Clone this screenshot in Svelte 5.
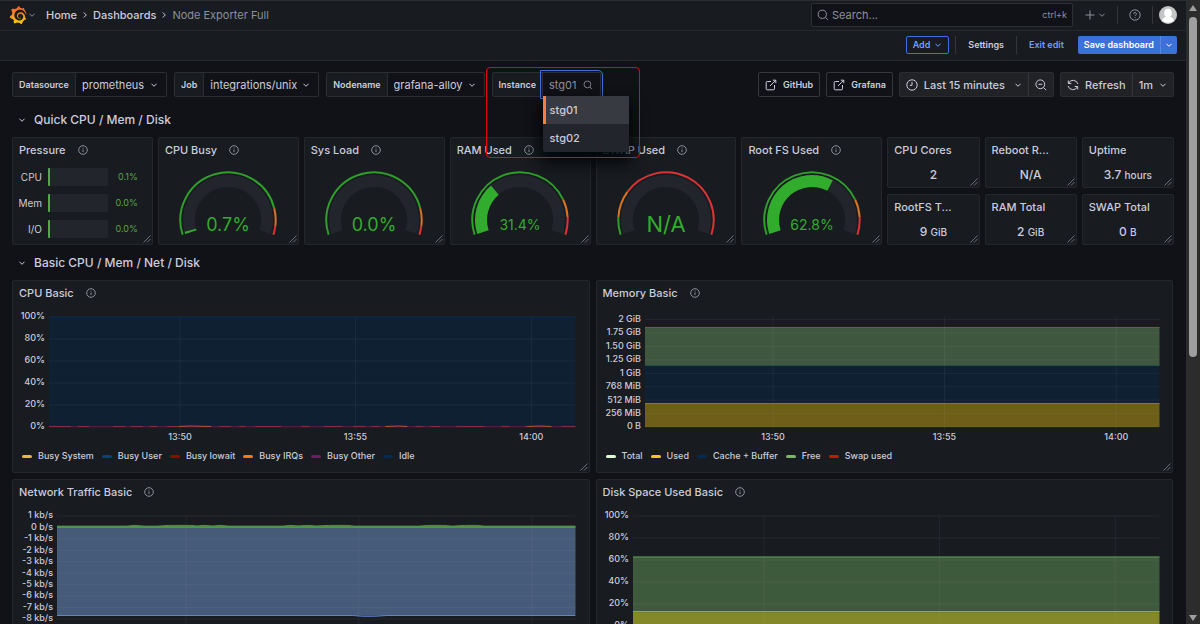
<script>
  const variables = [
    { id: "datasource", label: "Datasource", value: "prometheus" },
    { id: "job", label: "Job", value: "integrations/unix" },
    { id: "nodename", label: "Nodename", value: "grafana-alloy" },
  ];

  const instances = ["stg01", "stg02"];
  let instance = $state("stg01");

  const pressure = [
    { label: "CPU", value: "0.1%" },
    { label: "Mem", value: "0.0%" },
    { label: "I/O", value: "0.0%" },
  ];

  const gauges = [
    { title: "CPU Busy", text: "0.7%", value: 0.7, steps: [85, 95], size: "medium" },
    { title: "Sys Load", text: "0.0%", value: 0, steps: [85, 95], size: "medium" },
    { title: "RAM Used", text: "31.4%", value: 31.4, steps: [80, 90], size: "small" },
    { title: "SWAP Used", text: "N/A", value: 0, steps: [10, 25], size: "large" },
    { title: "Root FS Used", text: "62.8%", value: 62.8, steps: [80, 90], size: "small" },
  ];

  const stats = [
    { title: "CPU Cores", value: "2", unit: "" },
    { title: "Reboot R...", value: "N/A", unit: "" },
    { title: "Uptime", value: "3.7", unit: "hours" },
    { title: "RootFS T...", value: "9", unit: "GiB" },
    { title: "RAM Total", value: "2", unit: "GiB" },
    { title: "SWAP Total", value: "0", unit: "B" },
  ];

  const percentTicks = ["100%", "80%", "60%", "40%", "20%", "0%"];
  const times = [
    { label: "13:50", at: 24.9 },
    { label: "13:55", at: 58.2 },
    { label: "14:00", at: 91.6 },
  ];

  // step, areas and lines are percentages of the plot height, from the top
  const charts = [
    {
      title: "CPU Basic",
      axis: "short",
      ticks: percentTicks,
      first: 0,
      step: 20,
      areas: [{ from: 0, to: 100, color: "#0f2033" }],
      lines: [{ at: 0.5, color: "#052b51" }],
      noise: "cpu",
      legend: [
        ["Busy System", "#eab839"],
        ["Busy User", "#0a437c"],
        ["Busy Iowait", "#890f02"],
        ["Busy IRQs", "#ff780a"],
        ["Busy Other", "#6d1f62"],
        ["Idle", "#052b51"],
      ],
    },
    {
      title: "Memory Basic",
      axis: "wide",
      ticks: ["2 GiB", "1.75 GiB", "1.50 GiB", "1.25 GiB", "1 GiB", "768 MiB", "512 MiB", "256 MiB", "0 B"],
      first: 2.4,
      step: 12.2,
      areas: [
        { from: 9.1, to: 44.5, color: "#40573f" },
        { from: 44.5, to: 78.2, color: "#0f2033" },
        { from: 78.2, to: 100, color: "#6d5f18" },
      ],
      lines: [
        { at: 9.5, color: "#b53f2a" },
        { at: 44.1, color: "#285044" },
        { at: 78.6, color: "#8f7c12" },
      ],
      legend: [
        ["Total", "#e0f9d7"],
        ["Used", "#f2cc0c"],
        ["Cache + Buffer", "#052b51"],
        ["Free", "#7eb26d"],
        ["Swap used", "#bf1b00"],
      ],
    },
    {
      title: "Network Traffic Basic",
      axis: "medium",
      ticks: ["1 kb/s", "0 b/s", "-1 kb/s", "-2 kb/s", "-3 kb/s", "-4 kb/s", "-5 kb/s", "-6 kb/s", "-7 kb/s", "-8 kb/s"],
      first: 0,
      step: 10.4,
      areas: [{ from: 10.4, to: 90.6, color: "#465a79" }],
      lines: [
        { at: 9.5, color: "#4f9a48" },
        { at: 10.5, color: "#9c7440" },
      ],
      noise: "network",
      legend: [],
    },
    {
      title: "Disk Space Used Basic",
      axis: "short",
      ticks: percentTicks,
      first: 0,
      step: 20,
      areas: [
        { from: 36.9, to: 87.4, color: "#3e5a3d" },
        { from: 87.4, to: 100, color: "#858828" },
      ],
      lines: [
        { at: 37.3, color: "#619a58" },
        { at: 86.9, color: "#c3a80f" },
      ],
      legend: [],
    },
  ];

  // Gauge sweep: 216 degrees, starting 18 degrees below the left horizontal
  function point(radius, percent) {
    const angle = ((198 - percent * 2.16) * Math.PI) / 180;
    return `${(49 + radius * Math.cos(angle)).toFixed(2)} ${(49 - radius * Math.sin(angle)).toFixed(2)}`;
  }

  function arc(radius, from, to) {
    const large = (to - from) * 2.16 > 180 ? 1 : 0;
    return `M${point(radius, from)}A${radius} ${radius} 0 ${large} 1 ${point(radius, to)}`;
  }
</script>

{#snippet chevron()}
  <svg class="chevron" viewBox="0 0 8 8" aria-hidden="true"><path d="M1.5 2.8 4 5.3l2.5-2.5" /></svg>
{/snippet}

{#snippet separator()}
  <svg class="chevron" viewBox="0 0 8 8" aria-hidden="true"><path d="M2.8 1.5 5.3 4 2.8 6.5" /></svg>
{/snippet}

{#snippet magnifier()}
  <svg class="icon" viewBox="0 0 12 12" aria-hidden="true">
    <circle cx="5.3" cy="5.3" r="4.1" /><path d="m8.3 8.3 2.6 2.6" />
  </svg>
{/snippet}

{#snippet external()}
  <svg class="icon" viewBox="0 0 12 12" aria-hidden="true">
    <path d="M6 2.5H2.2a1 1 0 0 0-1 1v6.3a1 1 0 0 0 1 1h6.3a1 1 0 0 0 1-1V6M7.8 1.2h3v3M10.6 1.4 5 7" />
  </svg>
{/snippet}

{#snippet panelTitle(title, info)}
  <header class="panel-header">
    <h3>{title}</h3>
    {#if info}
      <button class="info" aria-label="Panel description">
        <svg class="info-icon" viewBox="0 0 10 10">
          <circle cx="5" cy="5" r="4.3" /><path d="M5 4.5v2.6M5 2.7v.9" />
        </svg>
      </button>
    {/if}
  </header>
{/snippet}

{#snippet handle()}
  <svg class="handle" viewBox="0 0 8 8" aria-hidden="true"><path d="M.5 7.5l7-7M4 7.5 7.5 4" /></svg>
{/snippet}

<div class="window">
  <div class="page">
    <header class="topbar">
      <button class="logo-button" aria-label="Open menu">
        <svg class="logo" viewBox="0 0 24 24">
          <defs>
            <linearGradient id="flame" x1="0" y1="1" x2="0" y2="0">
              <stop offset="0" stop-color="#fcd10a" />
              <stop offset="0.45" stop-color="#f9961e" />
              <stop offset="1" stop-color="#f05a28" />
            </linearGradient>
          </defs>
          <path
            fill="url(#flame)"
            d="M23.02 10.59a8.578 8.578 0 0 0-.862-3.034 8.911 8.911 0 0 0-1.789-2.445c.337-1.342-.413-2.505-.413-2.505-1.292-.08-2.113.4-2.416.62-.052-.02-.102-.044-.154-.064-.22-.089-.446-.172-.677-.247-.231-.073-.47-.14-.711-.197a9.867 9.867 0 0 0-.875-.161C14.557.753 12.94 0 12.94 0c-1.804 1.145-2.147 2.744-2.147 2.744l-.018.093c-.098.029-.2.057-.298.088-.138.042-.275.094-.413.143-.138.055-.275.107-.41.166a8.869 8.869 0 0 0-1.557.87l-.063-.029c-2.497-.955-4.716.195-4.716.195-.203 2.658.996 4.33 1.235 4.636a11.608 11.608 0 0 0-.607 2.635C1.636 12.677.953 15.014.953 15.014c1.926 2.214 4.171 2.351 4.171 2.351.003-.002.006-.002.006-.005.285.509.615.994.986 1.446.156.19.32.371.488.548-.704 2.009.099 3.68.099 3.68 2.144.08 3.553-.937 3.849-1.173a9.784 9.784 0 0 0 3.164.501h.08l.055-.003.107-.002.103-.005.003.002c1.01 1.44 2.788 1.646 2.788 1.646 1.264-1.332 1.337-2.653 1.337-2.94v-.058c0-.02-.003-.039-.003-.06.265-.187.52-.387.758-.6a7.875 7.875 0 0 0 1.415-1.7c1.43.083 2.437-.885 2.437-.885-.236-1.49-1.085-2.216-1.264-2.354l-.018-.013-.016-.013a.217.217 0 0 1-.031-.02c.008-.092.016-.18.02-.27.011-.162.016-.323.016-.48v-.253l-.005-.098-.008-.135a1.891 1.891 0 0 0-.01-.13c-.003-.042-.008-.083-.013-.125l-.016-.124-.018-.122a6.215 6.215 0 0 0-2.032-3.73 6.015 6.015 0 0 0-3.222-1.46 6.292 6.292 0 0 0-.85-.048l-.107.002h-.063l-.044.003-.104.008a4.777 4.777 0 0 0-3.335 1.695c-.332.4-.592.84-.768 1.297a4.594 4.594 0 0 0-.312 1.817l.003.091c.005.055.007.11.013.164a3.615 3.615 0 0 0 .698 1.82 3.53 3.53 0 0 0 1.827 1.282c.33.098.66.14.971.137.039 0 .078 0 .114-.002l.063-.003c.02 0 .041-.003.062-.003.034-.002.065-.007.099-.01.007 0 .018-.003.028-.003l.031-.005.06-.008a1.18 1.18 0 0 0 .112-.02c.036-.008.072-.013.109-.024a2.634 2.634 0 0 0 .914-.415c.028-.02.056-.041.085-.065a.248.248 0 0 0 .039-.35.244.244 0 0 0-.309-.06l-.078.042c-.09.044-.184.083-.283.116a2.476 2.476 0 0 1-.475.096c-.028.003-.054.006-.083.006l-.083.002c-.026 0-.054 0-.08-.002l-.102-.006h-.012l-.024.006c-.016-.003-.031-.003-.044-.006-.031-.002-.06-.007-.091-.01a2.59 2.59 0 0 1-.724-.213 2.557 2.557 0 0 1-.667-.438 2.52 2.52 0 0 1-.805-1.475 2.306 2.306 0 0 1-.029-.444l.006-.122v-.023l.002-.031c.003-.021.003-.04.005-.06a3.163 3.163 0 0 1 1.352-2.29 3.12 3.12 0 0 1 .937-.43 2.946 2.946 0 0 1 .776-.101h.06l.07.002.045.003h.026l.07.005a4.041 4.041 0 0 1 1.635.49 3.94 3.94 0 0 1 1.602 1.662 3.77 3.77 0 0 1 .397 1.414l.005.076.003.075c.002.026.002.05.002.075 0 .024.003.052 0 .07v.065l-.002.073-.008.174a6.195 6.195 0 0 1-.08.639 5.1 5.1 0 0 1-.267.927 5.31 5.31 0 0 1-.624 1.13 5.052 5.052 0 0 1-3.237 2.014 4.82 4.82 0 0 1-.649.066l-.039.003h-.287a6.607 6.607 0 0 1-1.716-.265 6.776 6.776 0 0 1-3.4-2.274 6.75 6.75 0 0 1-.746-1.15 6.616 6.616 0 0 1-.714-2.596l-.005-.083-.002-.02v-.056l-.003-.073v-.096l-.003-.104v-.07l.003-.163c.008-.22.026-.45.054-.678a8.707 8.707 0 0 1 .28-1.355c.128-.444.286-.872.473-1.277a7.04 7.04 0 0 1 1.456-2.1 5.925 5.925 0 0 1 .953-.763c.169-.111.343-.213.524-.306.089-.05.182-.091.273-.135.047-.02.093-.042.138-.062a7.177 7.177 0 0 1 .714-.267l.145-.045c.049-.015.098-.026.148-.041.098-.029.197-.052.296-.076.049-.013.1-.02.15-.033l.15-.032.151-.028.076-.013.075-.01.153-.024c.057-.01.114-.013.171-.023l.169-.021c.036-.003.073-.008.106-.01l.073-.008.036-.003.042-.002c.057-.003.114-.008.171-.01l.086-.006h.023l.037-.003.145-.007a7.999 7.999 0 0 1 1.708.125 7.917 7.917 0 0 1 2.048.68 8.253 8.253 0 0 1 1.672 1.09l.09.077.089.078c.06.052.114.107.171.159.057.052.112.106.166.16.052.055.107.107.159.164a8.671 8.671 0 0 1 1.41 1.978c.012.026.028.052.04.078l.04.078.075.156c.023.051.05.1.07.153l.065.15a8.848 8.848 0 0 1 .45 1.34.19.19 0 0 0 .201.142.186.186 0 0 0 .172-.184c.01-.246.002-.532-.024-.856z"
          />
        </svg>
        {@render chevron()}
      </button>
      <nav class="crumbs" aria-label="Breadcrumbs">
        <a href="#home">Home</a>
        {@render separator()}
        <a href="#dashboards">Dashboards</a>
        {@render separator()}
        <span>Node Exporter Full</span>
      </nav>
      <label class="search">
        {@render magnifier()}
        <input type="text" placeholder="Search..." aria-label="Search" />
        <kbd>ctrl+k</kbd>
      </label>
      <button class="quiet new" aria-label="New">
        <svg class="icon" viewBox="0 0 12 12"><path d="M6 1.5v9M1.5 6h9" /></svg>
        {@render chevron()}
      </button>
      <span class="rule"></span>
      <button class="quiet" aria-label="Help">
        <svg class="icon" viewBox="0 0 12 12">
          <circle cx="6" cy="6" r="5.2" />
          <path d="M4.6 4.9a1.4 1.4 0 1 1 2 1.3q-.6.3-.6.9M6 8.2v.9" />
        </svg>
      </button>
      <span class="rule"></span>
      <button class="avatar" aria-label="Profile">
        <svg viewBox="0 0 18 18">
          <circle cx="9" cy="9" r="9" fill="#c4c4c4" />
          <ellipse cx="9" cy="7" rx="3.8" ry="4.3" fill="#fff" />
          <path d="M3 14.3C4 11.600 6 10.500 9 10.500s5 1.100 6 3.800A8 8 0 0 1 9 17a8 8 0 0 1-6-2.700z" fill="#fff" />
        </svg>
      </button>
    </header>

    <div class="toolbar">
      <button class="button add">Add {@render chevron()}</button>
      <span class="rule"></span>
      <button class="button">Settings</button>
      <span class="rule"></span>
      <button class="button exit">Exit edit</button>
      <div class="save">
        <button class="button">Save dashboard</button>
        <button class="button more" aria-label="More save options">{@render chevron()}</button>
      </div>
    </div>

    <main>
      <div class="controls">
        {#each variables as variable}
          <div class="field">
            <label for={variable.id}>{variable.label}</label>
            <div class="select">
              <select id={variable.id}>
                <option>{variable.value}</option>
              </select>
              {@render chevron()}
            </div>
          </div>
        {/each}
        <div class="field instance">
          <label for="instance">Instance</label>
          <div class="combo">
            <input
              id="instance"
              type="text"
              role="combobox"
              aria-expanded="true"
              aria-controls="instance-list"
              placeholder={instance}
            />
            {@render magnifier()}
          </div>
          <div class="menu" id="instance-list" role="listbox">
            {#each instances as name}
              <button
                role="option"
                aria-selected={name === instance}
                class:selected={name === instance}
                onclick={() => (instance = name)}>{name}</button
              >
            {/each}
          </div>
          <div class="highlight"></div>
        </div>

        <div class="actions">
          <a class="link" href="#github">{@render external()} GitHub</a>
          <a class="link" href="#grafana">{@render external()} Grafana</a>
          <div class="group">
            <button>
              <svg class="icon" viewBox="0 0 12 12">
                <circle cx="6" cy="6" r="5.2" /><path d="M6 2.8V6.3H3.8" />
              </svg>
              Last 15 minutes
              <span class="spaced">{@render chevron()}</span>
            </button>
            <button aria-label="Zoom out">
              <svg class="icon" viewBox="0 0 12 12">
                <circle cx="5.3" cy="5.3" r="4.4" /><path d="m8.5 8.5 2.7 2.7M3.3 5.3h4" />
              </svg>
            </button>
          </div>
          <div class="group">
            <button>
              <svg class="icon" viewBox="0 0 12 12">
                <path d="M1.3 1.5v3h3M1.5 4.3A5 5 0 0 1 10.9 5M10.7 10.5v-3h-3M10.5 7.7A5 5 0 0 1 1.1 7" />
              </svg>
              Refresh
            </button>
            <button>1m {@render chevron()}</button>
          </div>
        </div>
      </div>

      <h2>{@render chevron()} Quick CPU / Mem / Disk</h2>
      <div class="grid quick">
        <section class="panel">
          {@render panelTitle("Pressure", true)}
          <div class="bars">
            {#each pressure as row}
              <span class="bar-label">{row.label}</span>
              <span class="bar"></span>
              <span class="bar-value">{row.value}</span>
            {/each}
          </div>
          {@render handle()}
        </section>
        {#each gauges as gauge}
          <section class="panel">
            {@render panelTitle(gauge.title, true)}
            <svg class="gauge" viewBox="0 0 98 66" role="img" aria-label={gauge.title}>
              <path class="track" d={arc(39, 0, 100)} />
              {#if gauge.value > 0}
                <path class="value" d={arc(39, 0, Math.max(gauge.value, 1.3))} />
              {/if}
              <path class="ring green" d={arc(47.7, 0, gauge.steps[0])} />
              <path class="ring orange" d={arc(47.7, gauge.steps[0], gauge.steps[1])} />
              <path class="ring red" d={arc(47.7, gauge.steps[1], 100)} />
              <text class={gauge.size} x="49" y="53">{gauge.text}</text>
            </svg>
            {@render handle()}
          </section>
        {/each}
        {#each stats as stat}
          <section class="panel stat">
            {@render panelTitle(stat.title, false)}
            <p>{stat.value} {#if stat.unit}<small>{stat.unit}</small>{/if}</p>
            {@render handle()}
          </section>
        {/each}
      </div>

      <h2>{@render chevron()} Basic CPU / Mem / Net / Disk</h2>
      <div class="grid basic">
        {#each charts as chart}
          <section class="panel">
            {@render panelTitle(chart.title, true)}
            <div class="chart {chart.axis}">
              <svg class="plot" role="img" aria-label={chart.title}>
                {#each chart.areas as area}
                  <rect x="0" y="{area.from}%" width="100%" height="{area.to - area.from}%" fill={area.color} />
                {/each}
                {#each chart.ticks as tick, i}
                  <line class="gridline" x1="0" x2="100%" y1="{chart.first + i * chart.step}%" y2="{chart.first + i * chart.step}%" />
                  <text class="tick-y" x="-4" y="{chart.first + i * chart.step - 1}%">{tick}</text>
                {/each}
                {#each times as time}
                  <line class="gridline" x1="{time.at}%" x2="{time.at}%" y1="0" y2="103%" />
                  <text class="tick-x" x="{time.at}%" y="109%">{time.label}</text>
                {/each}
                {#each chart.lines as line}
                  <line x1="0" x2="100%" y1="{line.at}%" y2="{line.at}%" stroke={line.color} />
                {/each}
                {#if chart.noise === "cpu"}
                  <line x1="0" x2="100%" y1="99.5%" y2="99.5%" stroke="#4b2140" />
                  <svg viewBox="0 0 526 110" preserveAspectRatio="none" width="100%" height="100%">
                    <path class="dashes" d="M0 109.5H22M29 109.5H40M64 109.5H76M82 109.5H94M101 109.5H108M118 109.5H130M170 109.5H182M190 109.5H196M206 109.5H232M252 109.5H260M275 109.5H293M304 109.5H316M322 109.5H330M366 109.5H374M381 109.5H391M407 109.5H435M452 109.5H460M476 109.5H482M512 109.5H526" />
                    <path class="burst" d="M130 109.5 141 109 162 109.5M336 109.5 350 109 358 109.5M478 109.5 490 109 502 109.5" />
                  </svg>
                {:else if chart.noise === "network"}
                  <svg viewBox="0 0 519 110" preserveAspectRatio="none" width="100%" height="100%">
                    <path class="received" d="M0 10.2H70L77 9.4 88 10.2H100L112 9.4H134L140 10 147 9.4 156 10 164 9.4 172 10.2H226L233 9.4 242 10 250 9.4 260 10 272 9.4H290L298 10.2H362L372 9.4H386L396 10.2 408 9.4H420L428 10.2H519" />
                    <path class="sent" d="M0 99.5H296L306 100.3H318L330 99.5H519" />
                  </svg>
                {/if}
              </svg>
            </div>
            <ul class="legend">
              {#each chart.legend as [name, color]}
                <li><i style="background: {color}"></i>{name}</li>
              {/each}
            </ul>
            {@render handle()}
          </section>
        {/each}
      </div>
    </main>
  </div>

  <div class="scrollbar" aria-hidden="true">
    <svg viewBox="0 0 10 8"><path d="M5 1 9 7H1z" /></svg>
    <div class="thumb"></div>
    <svg viewBox="0 0 10 8"><path d="M5 7 1 1h8z" /></svg>
  </div>
</div>

<style>
  :global(body) {
    background: #111217;
    overflow: hidden;
  }

  * {
    box-sizing: border-box;
    margin: 0;
    padding: 0;
  }

  .window {
    display: flex;
    height: 100vh;
    overflow: hidden;
    color: #ccccdc;
    font: 11px/16px Inter, "Liberation Sans", sans-serif;
  }

  .page {
    flex: 1;
    min-width: 0;
    overflow-y: auto;
    scrollbar-width: none;
  }

  button,
  input,
  select {
    font: inherit;
    color: inherit;
    background: none;
    border: none;
    outline: none;
  }

  button {
    display: inline-flex;
    align-items: center;
    cursor: pointer;
  }

  a {
    color: inherit;
    text-decoration: none;
  }

  svg {
    display: block;
    flex: none;
  }

  .icon,
  .chevron,
  .info-icon,
  .handle {
    fill: none;
    stroke: currentColor;
  }

  .icon {
    width: 12px;
    height: 12px;
  }

  .chevron {
    width: 8px;
    height: 8px;
  }

  .rule {
    width: 1px;
    height: 18px;
    background: #34363c;
  }

  /* Top bar */
  .topbar {
    display: flex;
    align-items: center;
    height: 31px;
    padding: 0 9px 1px;
    background: #181b1f;
    border-top: 1px solid #2b2d2e;
    border-bottom: 1px solid #26282d;
  }

  .logo-button {
    gap: 1px;
    color: #8e8e9b;
  }

  .logo {
    width: 18px;
    height: 18px;
  }

  .crumbs {
    display: flex;
    align-items: center;
    gap: 4px;
    margin-left: 10px;
    font-weight: 500;
  }

  .crumbs span {
    color: #8e8f9b;
    font-weight: 400;
  }

  .search {
    display: flex;
    align-items: center;
    gap: 3px;
    width: 262px;
    height: 24px;
    margin-left: auto;
    padding: 0 5px;
    background: #111217;
    border: 1px solid #2d2f35;
    border-radius: 2px;
    color: #8e8f9b;
  }

  .search input {
    flex: 1;
    min-width: 0;
  }

  .search input::placeholder {
    color: #8e8f9b;
    opacity: 1;
  }

  .search kbd {
    font: inherit;
    font-size: 9px;
  }

  .quiet {
    color: #8e8f9b;
  }

  .topbar .quiet {
    margin: 0 11px;
  }

  .topbar .new {
    gap: 2px;
  }

  .avatar {
    margin-left: 6px;
  }

  .avatar svg {
    width: 18px;
    height: 18px;
  }

  /* Edit toolbar */
  .toolbar {
    display: flex;
    align-items: center;
    justify-content: flex-end;
    gap: 6px;
    height: 30px;
    padding: 0 9px 1px;
    background: #181b1f;
    border-bottom: 1px solid #26282d;
  }

  .button {
    gap: 4px;
    height: 18px;
    padding: 0 6px;
    font-size: 9px;
    font-weight: 600;
    white-space: nowrap;
  }

  .add {
    border: 1px solid #3d71d9;
    border-radius: 2px;
    color: #6e9fff;
  }

  .exit {
    color: #6e9fff;
  }

  .save {
    display: flex;
    margin-left: 2px;
    background: #3d71d9;
    border-radius: 2px;
    color: #fff;
  }

  .more {
    padding: 0 4px;
    border-left: 1px solid #5b87e0;
  }

  main {
    padding: 11px 12px 0;
  }

  /* Variables and time controls */
  .controls {
    display: flex;
    gap: 7px;
    height: 25px;
  }

  .field {
    display: flex;
    border: 1px solid #2b2d33;
    border-radius: 2px;
  }

  .field label {
    display: flex;
    align-items: center;
    padding: 0 6px;
    background: #181b1f;
    border-right: 1px solid #2b2d33;
    font-size: 9px;
    font-weight: 600;
  }

  .select {
    display: flex;
    align-items: center;
    position: relative;
  }

  .select select {
    appearance: none;
    height: 100%;
    padding: 0 21px 0 6px;
  }

  .select .chevron {
    position: absolute;
    right: 8px;
    pointer-events: none;
  }

  .instance {
    position: relative;
  }

  .combo {
    display: flex;
    align-items: center;
    width: 57px;
    padding: 0 6px;
    outline: 1px solid #3d71d9;
    outline-offset: 2px;
    border-radius: 0 2px 0 0;
    color: #8e8f9b;
  }

  .combo input {
    width: 34px;
  }

  .combo input::placeholder {
    color: #8e8f9b;
    opacity: 1;
  }

  .combo .icon {
    width: 10px;
    height: 10px;
  }

  .menu {
    position: absolute;
    z-index: 2;
    top: 23px;
    left: 50px;
    width: 86px;
    background: #22252b;
    border-radius: 2px;
    box-shadow: 0 8px 16px 2px #010409;
  }

  .menu button {
    width: 100%;
    height: 28px;
    padding-left: 7px;
    font-weight: 500;
  }

  .menu .selected {
    background: #383a41;
    padding-left: 4px;
    border-left: 3px solid #ff7b3d;
  }

  .highlight {
    position: absolute;
    z-index: 3;
    top: -6px;
    left: -7px;
    width: 154px;
    height: 91px;
    border: 1px solid #ea0606;
    border-radius: 4px;
    pointer-events: none;
  }

  .actions {
    display: flex;
    gap: 6px;
    margin-left: auto;
    font-weight: 500;
  }

  .link {
    display: flex;
    align-items: center;
    gap: 6px;
    padding: 0 6px;
    border: 1px solid #34363c;
    border-radius: 2px;
    font-size: 9px;
    font-weight: 600;
  }

  .group {
    display: flex;
    background: #202226;
    border: 1px solid #2b2d33;
    border-radius: 2px;
  }

  .group button {
    gap: 6px;
    padding: 0 6px;
    font-weight: 500;
    white-space: nowrap;
  }

  .group button + button {
    border-left: 1px solid #34363c;
  }

  .spaced {
    margin-left: 3px;
  }

  /* Dashboard rows */
  h2 {
    display: flex;
    align-items: center;
    gap: 8px;
    height: 35px;
    margin-top: 5px;
    padding-left: 6px;
    font-size: 12px;
    font-weight: 500;
  }

  .grid + h2 {
    margin-top: 0;
  }

  .grid {
    display: grid;
    gap: 6px 5px;
  }

  /* The six stats fill two rows of three beside the tall panels */
  .quick {
    grid-template-columns: repeat(24, 1fr);
    grid-template-rows: repeat(2, 51px);
  }

  .quick .panel {
    grid-row: span 2;
    grid-column: span 3;
  }

  .quick .stat {
    grid-row: span 1;
    grid-column: span 2;
  }

  .basic {
    grid-template-columns: 1fr 1fr;
    column-gap: 6px;
    padding-right: 1px;
  }

  .panel {
    position: relative;
    min-width: 0;
    background: #181b1f;
    border: 1px solid #24262b;
    border-radius: 2px;
  }

  .panel-header {
    display: flex;
    align-items: center;
    gap: 12px;
    height: 24px;
    padding: 0 6px;
  }

  h3 {
    overflow: hidden;
    font-size: 11px;
    font-weight: 500;
    text-overflow: ellipsis;
    white-space: nowrap;
  }

  .info {
    color: #8e8f9b;
  }

  .info-icon {
    width: 10px;
    height: 10px;
  }

  .handle {
    position: absolute;
    right: 1px;
    bottom: 1px;
    width: 8px;
    height: 8px;
    color: #6c6d76;
  }

  .bars {
    display: grid;
    grid-template-columns: 29px 1fr 30px;
    row-gap: 8px;
    margin-top: 6px;
    padding-right: 14px;
    line-height: 18px;
    text-align: right;
  }

  .bar-label {
    font-size: 10px;
  }

  .bar {
    margin-left: 6px;
    background: #22252b;
    border-left: 2px solid #56a64b;
    border-radius: 1px;
  }

  .bar-value {
    color: #56a64b;
    font-size: 9px;
  }

  .gauge {
    width: 98px;
    height: 66px;
    margin: 9px auto 0;
    fill: none;
  }

  .gauge text {
    fill: #32ac2d;
    text-anchor: middle;
    dominant-baseline: central;
  }

  .gauge .small {
    font-size: 14px;
  }

  .gauge .medium {
    font-size: 18px;
  }

  .gauge .large {
    font-size: 22px;
  }

  .track {
    stroke: #22252b;
    stroke-width: 12;
  }

  .value {
    stroke: #32ac2d;
    stroke-width: 12;
  }

  .ring {
    stroke-width: 2;
  }

  .green {
    stroke: #2f9e2b;
  }

  .orange {
    stroke: #d57526;
  }

  .red {
    stroke: #dd3335;
  }

  .stat p {
    padding-top: 5px;
    font-size: 12px;
    font-weight: 500;
    text-align: center;
  }

  small {
    font-size: 10px;
  }

  /* Time series */
  .chart {
    margin-top: 12px;
    padding-right: 13px;
  }

  .short {
    padding-left: 36px;
  }

  .medium {
    padding-left: 44px;
  }

  .wide {
    padding-left: 48px;
  }

  .plot {
    width: 100%;
    height: 110px;
    overflow: visible;
  }

  .gridline {
    stroke: #ccccdc;
    stroke-opacity: 0.07;
  }

  .tick-x,
  .tick-y {
    fill: #ccccdc;
    font-size: 9px;
    font-weight: 500;
    dominant-baseline: central;
  }

  .tick-x {
    text-anchor: middle;
  }

  .tick-y {
    text-anchor: end;
  }

  .dashes,
  .burst,
  .received,
  .sent {
    fill: none;
    vector-effect: non-scaling-stroke;
  }

  .dashes {
    stroke: #8a2c3c;
  }

  .burst {
    stroke: #b5523c;
  }

  .received {
    stroke: #4f9a48;
  }

  .sent {
    stroke: #5b86c9;
  }

  .legend {
    display: flex;
    gap: 8px;
    height: 16px;
    margin: 21px 9px 8px;
    font-size: 9px;
    font-weight: 500;
    list-style: none;
    white-space: nowrap;
  }

  .legend li {
    display: flex;
    align-items: center;
    gap: 6px;
  }

  .legend i {
    width: 10px;
    height: 3px;
    border-radius: 2px;
  }

  /* Scrollbar */
  .scrollbar {
    display: flex;
    flex-direction: column;
    align-items: center;
    width: 14px;
    padding: 4px 0 2px;
    background: #2c2c2c;
  }

  .scrollbar svg {
    width: 10px;
    height: 8px;
    fill: #9f9f9f;
  }

  .thumb {
    width: 8px;
    height: 55%;
    margin: 5px 0 auto;
    background: #9f9f9f;
    border-radius: 4px;
  }
</style>
